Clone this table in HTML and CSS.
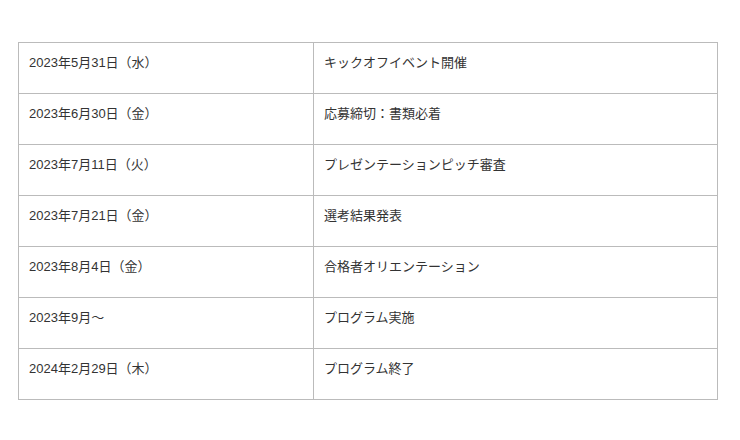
FILE: index.html
```html
<!DOCTYPE html>
<html lang="ja">
<head>
<meta charset="utf-8">
<link rel="stylesheet" href="styles.css">
</head>
<body>
<div class="wrap">
<table class="sched">
<tr><td class="date">2023年5月31日（水）</td><td class="ev">キックオフイベント開催</td></tr>
<tr><td class="date">2023年6月30日（金）</td><td class="ev">応募締切：書類必着</td></tr>
<tr><td class="date">2023年7月11日（火）</td><td class="ev">プレゼンテーションピッチ審査</td></tr>
<tr><td class="date">2023年7月21日（金）</td><td class="ev">選考結果発表</td></tr>
<tr><td class="date">2023年8月4日（金）</td><td class="ev">合格者オリエンテーション</td></tr>
<tr><td class="date">2023年9月～</td><td class="ev">プログラム実施</td></tr>
<tr><td class="date">2024年2月29日（木）</td><td class="ev">プログラム終了</td></tr>
</table>
</div>
</body>
</html>
```
FILE: styles.css
```css
html, body { margin: 0; padding: 0; background: #fff; }
.wrap { padding: 42px 0 0 18px; }
.sched {
  border-collapse: collapse;
  width: 700px;
  font-family: "Liberation Sans", "Noto Sans CJK JP", sans-serif;
  font-size: 13px;
  color: #333;
}
.sched td {
  border: 1px solid #bbb;
  vertical-align: top;
  padding: 10px 10px 0 10px;
  height: 40px;
  line-height: 20px;
  box-sizing: border-box;
}
.sched td { height: 51px; }
.date { width: 295px; }
```
